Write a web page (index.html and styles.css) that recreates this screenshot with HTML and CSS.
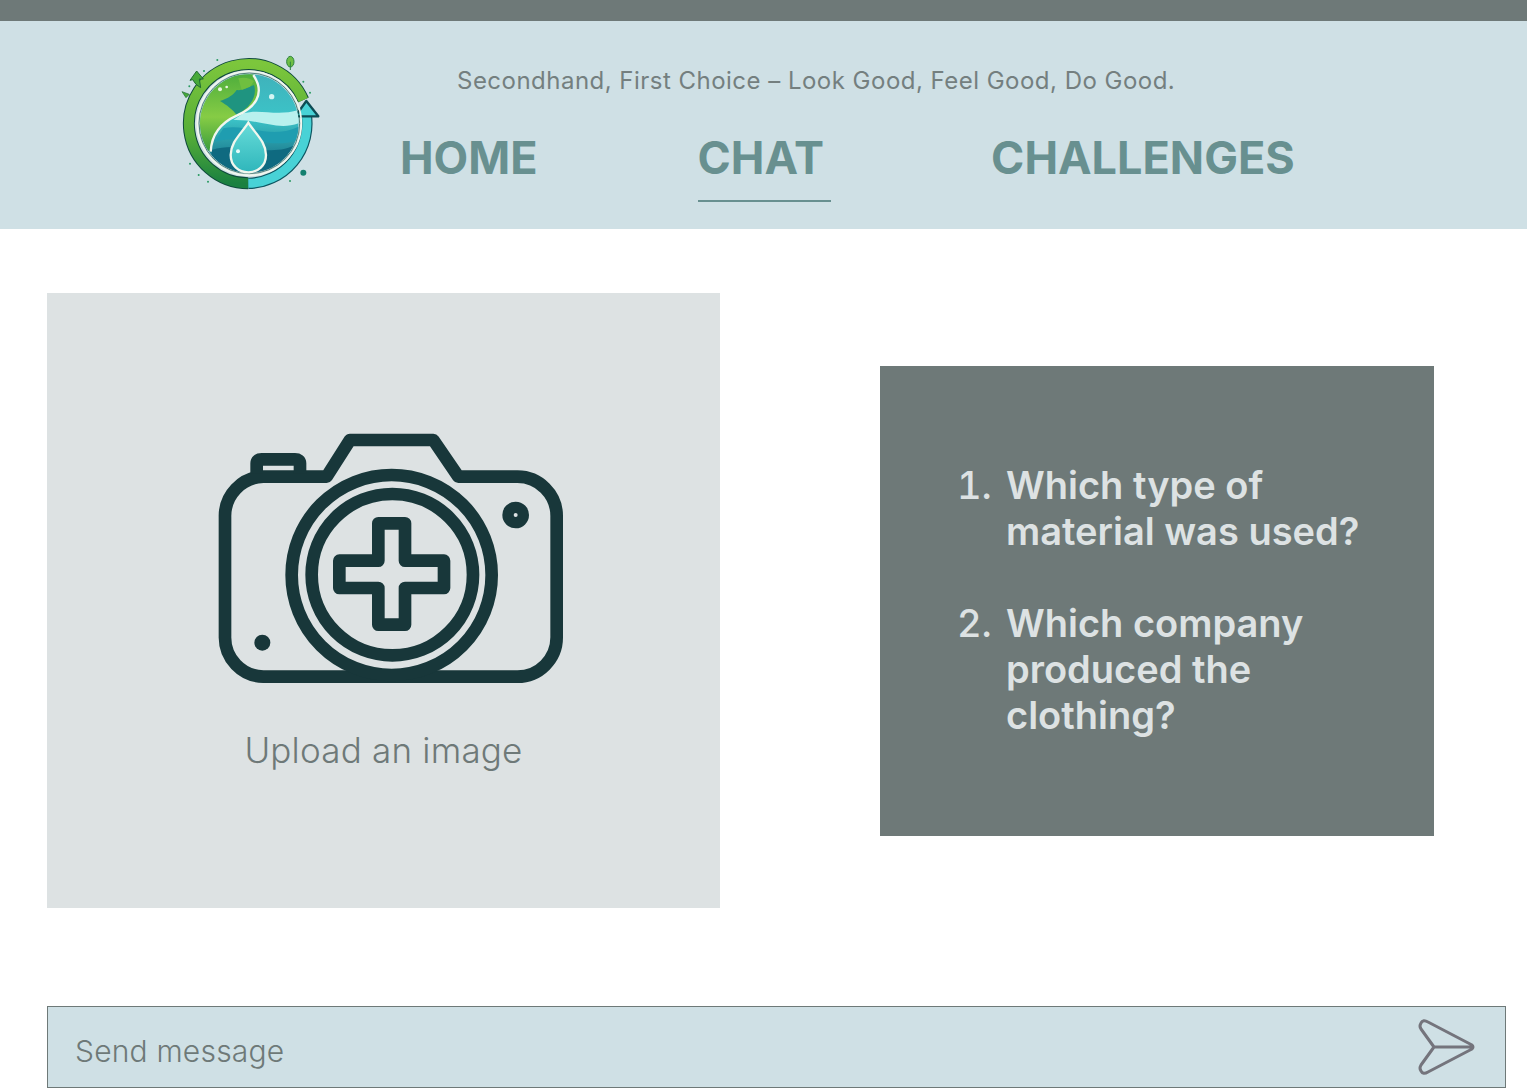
FILE: index.html
```html
<!DOCTYPE html>
<html lang="en">
<head>
    <meta charset="UTF-8">
    <meta name="viewport" content="width=device-width, initial-scale=1.0">
    <title>Chat</title>
    <link rel="stylesheet" href="styles.css">
</head>
<body>
    <div class="top-bar"></div>
    <header class="header">
        <svg class="logo" viewBox="0 0 480 450" aria-label="Logo">
            <defs>
                <linearGradient id="land" x1="0" y1="0" x2="0" y2="1">
                    <stop offset="0" stop-color="#4fae3c"/>
                    <stop offset="0.55" stop-color="#86cc45"/>
                    <stop offset="1" stop-color="#3a9c3c"/>
                </linearGradient>
                <linearGradient id="sea" x1="0" y1="0" x2="0" y2="1">
                    <stop offset="0" stop-color="#3fb2bb"/>
                    <stop offset="0.45" stop-color="#3cc4c8"/>
                    <stop offset="1" stop-color="#0f5f78"/>
                </linearGradient>
                <linearGradient id="ring" x1="0" y1="0" x2="0" y2="1">
                    <stop offset="0" stop-color="#7cc63c"/>
                    <stop offset="0.6" stop-color="#55ad38"/>
                    <stop offset="1" stop-color="#1a8040"/>
                </linearGradient>
                <linearGradient id="drop" x1="0" y1="0" x2="0" y2="1">
                    <stop offset="0" stop-color="#67dcd9"/>
                    <stop offset="1" stop-color="#2fb6bb"/>
                </linearGradient>
                <clipPath id="globe"><circle cx="238" cy="235" r="148"/></clipPath>
            </defs>
            <!-- ring -->
            <path d="M235 415A179 179 0 1 1 400 165" fill="none" stroke="#0f4a3c" stroke-width="36"/>
            <path d="M235 415A179 179 0 1 1 400 165" fill="none" stroke="url(#ring)" stroke-width="30"/>
            <path d="M235 415A179 179 0 0 0 408 205" fill="none" stroke="#0d5560" stroke-width="34"/>
            <path d="M235 415A179 179 0 0 0 408 205" fill="none" stroke="#48d2d6" stroke-width="27"/>
            <path d="M409 168L445 214H376Z" fill="#48d2d6" stroke="#0d4c55" stroke-width="7" stroke-linejoin="round"/>
            <circle cx="238" cy="235" r="156" fill="none" stroke="#f1f7ee" stroke-width="5"/>
            <circle cx="238" cy="235" r="151" fill="none" stroke="#12503f" stroke-width="2"/>
            <!-- globe -->
            <g clip-path="url(#globe)">
                <rect x="90" y="88" width="296" height="296" fill="url(#sea)"/>
                <path d="M250 88C290 150 250 190 200 212C160 230 125 260 122 320L85 300V88Z" fill="url(#land)"/>
                <path d="M150 168C175 160 190 150 200 135C215 138 235 125 252 120C262 150 245 185 200 210C190 195 170 180 150 168Z" fill="#1f9480"/>
                <path d="M205 100C225 95 240 100 252 108L240 125L215 135Z" fill="#6fbf40"/>
                <path d="M220 205C270 190 320 215 386 195V235C320 258 270 222 190 225Z" fill="#b8f1ee"/>
                <path d="M160 250C230 235 300 285 386 245V285C300 315 230 265 135 290Z" fill="#1f9db0"/>
                <path d="M125 315C220 285 300 345 386 295V384H125Z" fill="#0f6a80"/>
                <path d="M250 90C290 150 250 190 200 212C160 230 125 260 122 320" fill="none" stroke="#f1f7ee" stroke-width="7"/>
            </g>
            <!-- drop -->
            <path d="M235 233C215 265 182 290 182 330C182 362 206 382 235 382C264 382 288 362 288 330C288 290 255 265 235 233Z" fill="url(#drop)" stroke="#f1f7ee" stroke-width="7"/>
            <circle cx="204" cy="319" r="6" fill="#e6fbfa"/>
            <circle cx="305" cy="155" r="8" fill="#d5f5f3"/>
            <circle cx="150" cy="133" r="6" fill="#e8f7df"/>
            <circle cx="170" cy="126" r="4" fill="#e8f7df"/>
            <!-- leaves and specks -->
            <path d="M80 78L100 102H88L92 128L78 118L68 104L60 106Z" fill="#47a93a" stroke="#1f6b33" stroke-width="3"/>
            <path d="M36 140L58 148L48 158Z" fill="#47a93a" stroke="#1f6b33" stroke-width="2"/>
            <ellipse cx="361" cy="50" rx="11" ry="16" fill="#6fbf45" stroke="#2c8240" stroke-width="3"/>
            <path d="M361 50V75" stroke="#2c8240" stroke-width="3"/>
            <circle cx="400" cy="383" r="9" fill="#14806f"/>
            <g fill="#2a9a62">
                <circle cx="142" cy="45" r="3"/>
                <circle cx="102" cy="78" r="3"/>
                <circle cx="58" cy="124" r="3"/>
                <circle cx="60" cy="356" r="3"/>
                <circle cx="86" cy="390" r="3"/>
                <circle cx="114" cy="410" r="3"/>
                <circle cx="360" cy="408" r="3"/>
                <circle cx="420" cy="143" r="3"/>
                <circle cx="400" cy="110" r="3"/>
            </g>
        </svg>
        <div class="header-main">
            <p class="tagline">Secondhand, First Choice – Look Good, Feel Good, Do Good.</p>
            <nav class="nav">
                <a class="nav-link" href="#">HOME</a>
                <a class="nav-link active" href="#">CHAT</a>
                <a class="nav-link" href="#">CHALLENGES</a>
            </nav>
        </div>
    </header>
    <main class="content">
        <div class="upload">
            <svg class="camera" viewBox="0 0 1140 840" aria-hidden="true">
                <g fill="none" stroke="#18373a" stroke-width="38" stroke-linejoin="round">
                    <path d="M190 170H380L450 60H700L775 170H950A118 118 0 0 1 1070 290V650A118 118 0 0 1 950 770H190A118 118 0 0 1 75 650V290A118 118 0 0 1 190 170Z"/>
                    <path d="M170 160V130Q170 118 185 118H285Q300 118 300 130V160"/>
                    <circle cx="575" cy="465" r="300"/>
                    <circle cx="577" cy="464" r="242"/>
                    <path d="M535 310H615V422H732V504H615V614H535V504H418V422H535Z"/>
                    <circle cx="947" cy="285" r="23" stroke-width="34"/>
                </g>
                <circle cx="187" cy="668" r="24" fill="#18373a"/>
            </svg>
            <p class="upload-text">Upload an image</p>
        </div>
        <div class="questions">
            <ol class="question-list">
                <li>Which type of material was used?</li>
                <li>Which company produced the clothing?</li>
            </ol>
        </div>
    </main>
    <form class="message-bar">
        <span class="message-text">Send message</span>
        <svg class="send" viewBox="0 0 60 58" aria-hidden="true">
            <path d="M6 5Q8 1 13 4L57 27Q59 29 57 31L13 54Q8 57 6 53Q4 50 6 47L19 29L6 11Q4 8 6 5Z M19 29H57" fill="none" stroke="#74747c" stroke-width="3" stroke-linejoin="round"/>
        </svg>
    </form>
</body>
</html>
```

FILE: styles.css
```css
body {
    margin: 0;
    height: 1088px;
    overflow: hidden;
    font-family: Inter, "Liberation Sans", sans-serif;
    background-color: #fff;
    color: #6e7978;
}
.top-bar {
    height: 21px;
    background-color: #6e7978;
}
.header {
    display: flex;
    height: 208px;
    padding-left: 170px;
    background-color: #cfe0e5;
    box-sizing: border-box;
}
.logo {
    width: 160px;
    height: 150px;
    margin-top: 24px;
}
.header-main {
    margin-left: 70px;
}
.tagline {
    margin: 45px 0 0 57px;
    font-size: 24px;
    line-height: 30px;
    letter-spacing: 0.48px;
    color: #747f7f;
}
.nav {
    display: flex;
    gap: 160px;
    margin-top: 35px;
}
.nav-link {
    padding-bottom: 15px;
    font-size: 45px;
    line-height: 54px;
    font-weight: 700;
    color: #689090;
    text-decoration: none;
}
.nav-link.active {
    height: 54px;
    padding-right: 7px;
    border-bottom: 2px solid #689090;
}
.content {
    display: flex;
    align-items: center;
    height: 615px;
    margin-top: 64px;
    padding-left: 47px;
}
.upload {
    width: 673px;
    height: 615px;
    background-color: #dde2e3;
    box-sizing: border-box;
    padding-top: 127px;
}
.camera {
    display: block;
    width: 380px;
    height: 280px;
    margin-left: 153px;
}
.upload-text {
    margin: 30px 0 0;
    font-size: 35px;
    line-height: 41px;
    font-weight: 300;
    letter-spacing: 0.2px;
    text-align: center;
}
.questions {
    width: 554px;
    height: 470px;
    margin-left: 160px;
    background-color: #6e7978;
    box-sizing: border-box;
    padding: 96px 60px 0 0;
}
.question-list {
    margin: 0;
    padding-left: 122px;
    font-size: 38px;
    line-height: 46px;
    font-weight: 600;
    color: #dde2e3;
}
.question-list li {
    padding-left: 4px;
}
.question-list li::marker {
    font-weight: 500;
}
.question-list li + li {
    margin-top: 46px;
}
.message-bar {
    display: flex;
    align-items: center;
    justify-content: space-between;
    width: 1459px;
    height: 82px;
    margin: 98px 0 0 47px;
    padding: 0 30px 0 27px;
    background-color: #cfe0e5;
    border: 1px solid #6e7978;
    box-sizing: border-box;
}
.message-text {
    padding-top: 8px;
    font-size: 30px;
    font-weight: 300;
    letter-spacing: 0.2px;
}
.send {
    width: 60px;
    height: 58px;
}
```
